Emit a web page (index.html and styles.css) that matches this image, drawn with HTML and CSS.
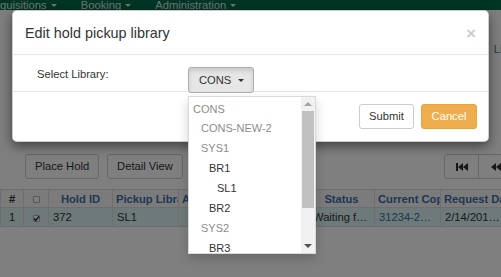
FILE: index.html
```html
<!DOCTYPE html>
<html>
<head>
<meta charset="utf-8">
<link rel="stylesheet" href="styles.css">
</head>
<body>
<div class="page">
  <nav class="navbar">
    <span class="nav-item">quisitions <b class="caret"></b></span>
    <span class="nav-item">Booking <b class="caret"></b></span>
    <span class="nav-item">Administration <b class="caret"></b></span>
  </nav>
  <div class="subhead"><span class="subhead-text">Line</span></div>
  <div class="toolbar">
    <button class="btn">Place Hold</button>
    <button class="btn">Detail View</button>
    <div class="pager">
      <button class="btn pg"><svg width="12" height="8" viewBox="0 0 12 8"><rect x="0" y="0" width="2" height="8" fill="#333"/><path d="M2 4 L7 0 V8 Z M7 4 L12 0 V8 Z" fill="#333"/></svg></button>
      <button class="btn pg"><svg width="10" height="8" viewBox="0 0 10 8"><path d="M0 4 L5 0 V8 Z M5 4 L10 0 V8 Z" fill="#333"/></svg></button>
    </div>
  </div>
  <table class="grid">
    <colgroup>
      <col class="c-num"><col class="c-cb"><col class="c-id"><col class="c-w"><col class="c-wide"><col class="c-w"><col class="c-w"><col class="c-w">
    </colgroup>
    <thead>
      <tr>
        <th class="plain">#</th>
        <th><span class="cb"></span></th>
        <th>Hold ID</th>
        <th>Pickup Library</th>
        <th class="left">Available</th>
        <th>Status</th>
        <th>Current Copy</th>
        <th>Request Date</th>
      </tr>
    </thead>
    <tbody>
      <tr class="sel">
        <td class="center">1</td>
        <td class="center"><span class="cb checked"><svg width="7" height="7" viewBox="0 0 7 7"><path d="M1 3.6 L2.8 5.4 L6 1.4" fill="none" stroke="#222" stroke-width="1.4"/></svg></span></td>
        <td>372</td>
        <td>SL1</td>
        <td></td>
        <td>Waiting for Copy</td>
        <td class="link">31234-22001</td>
        <td>2/14/2018 10:21</td>
      </tr>
    </tbody>
  </table>
</div>
<div class="backdrop"></div>
<div class="modal">
  <div class="modal-header">
    <h4 class="modal-title">Edit hold pickup library</h4>
    <span class="close">&times;</span>
  </div>
  <div class="modal-body">
    <label class="field-label">Select Library:</label>
    <div class="dd">
      <button class="btn dd-toggle">CONS <span class="caret"></span></button>
      <div class="dd-menu">
        <ul class="dd-list">
          <li class="lv0 grp">CONS</li>
          <li class="lv1 grp">CONS-NEW-2</li>
          <li class="lv1 grp">SYS1</li>
          <li class="lv2">BR1</li>
          <li class="lv3">SL1</li>
          <li class="lv2">BR2</li>
          <li class="lv1 grp">SYS2</li>
          <li class="lv2">BR3</li>
        </ul>
        <div class="sb">
          <div class="sb-btn"><span class="tri up"></span></div>
          <div class="sb-thumb"></div>
          <div class="sb-track"></div>
          <div class="sb-btn"><span class="tri down"></span></div>
        </div>
      </div>
    </div>
  </div>
  <div class="modal-footer">
    <button class="btn">Submit</button>
    <button class="btn btn-warning">Cancel</button>
  </div>
</div>
</body>
</html>
```
FILE: styles.css
```css
* { box-sizing: border-box; }
html, body { margin: 0; padding: 0; }
body {
  width: 501px;
  height: 277px;
  overflow: hidden;
  position: relative;
  background: #fff;
  color: #333;
  font-family: "Liberation Sans", Arial, sans-serif;
  font-size: 11.2px;
}
button { font-family: inherit; }

.navbar {
  height: 10px;
  background: #006b4c;
  display: flex;
  gap: 24px;
  overflow: hidden;
  color: #dfe8e4;
  line-height: 13px;
}
.nav-item { margin-top: -1.5px; white-space: nowrap; }
.caret {
  display: inline-block;
  width: 0; height: 0;
  vertical-align: middle;
  border-top: 3px solid;
  border-left: 3px solid transparent;
  border-right: 3px solid transparent;
  margin-left: 1px;
}

.subhead {
  height: 144px;
  display: flex;
  justify-content: flex-end;
  align-items: flex-start;
  padding-top: 33px;
}
.subhead-text { margin-right: -14px; color: #337ab7; }

.toolbar {
  display: flex;
  gap: 8px;
  padding-left: 25px;
  margin-right: -12px;
  margin-bottom: 10px;
}
.btn {
  height: 25px;
  padding: 0 9px;
  border: 1px solid #ccc;
  border-radius: 3px;
  background: #fff;
  color: #333;
  font-size: 11.2px;
  line-height: 23px;
  white-space: nowrap;
}
.pager { margin-left: auto; display: flex; }
.pg { width: 35px; padding: 0; display: flex; align-items: center; justify-content: center; }
.pg:first-child { border-radius: 3px 0 0 3px; }
.pg:last-child { border-radius: 0; margin-left: -1px; }

.grid {
  table-layout: fixed;
  border-collapse: collapse;
  width: 506px;
  font-size: 11.2px;
}
.c-num { width: 23px; }
.c-cb { width: 25px; }
.c-id { width: 64px; }
.c-w { width: 66px; }
.c-wide { width: 130px; }
.grid th, .grid td {
  border: 1px solid #ddd;
  overflow: hidden;
  white-space: nowrap;
  padding: 0 3px;
}
.grid th {
  height: 18px;
  font-weight: bold;
  color: #3a6fa8;
  text-align: center;
  background: #f6f6f6;
}
.grid th.plain { color: #333; }
.grid th.left { text-align: left; }
.grid td {
  height: 19px;
  text-overflow: ellipsis;
  padding: 0 4px;
}
.grid td.center { text-align: center; }
.grid td.link { color: #3a6fa8; }
.grid tr.sel td { background: #dcf2f2; }
.cb {
  display: inline-block;
  width: 7px; height: 7px;
  border: 1px solid #aaa;
  border-radius: 1px;
  background: #fff;
  vertical-align: middle;
  position: relative;
}
.cb svg { display: block; margin: -1px 0 0 -1px; }

.backdrop {
  position: absolute;
  inset: 0;
  background: rgba(0,0,0,0.5);
}

.modal {
  position: absolute;
  left: 12px;
  top: 10px;
  width: 477px;
  background: #fff;
  border: 1px solid rgba(0,0,0,0.2);
  border-radius: 5px;
  box-shadow: 0 4px 12px rgba(0,0,0,0.5);
}
.modal-header {
  height: 44px;
  padding: 12px 12px 0 12px;
  border-bottom: 1px solid #e5e5e5;
  display: flex;
  justify-content: space-between;
  align-items: flex-start;
}
.modal-title {
  margin: 0;
  font-size: 14.4px;
  font-weight: normal;
  line-height: 20.6px;
  color: #333;
}
.close {
  font-size: 16.8px;
  font-weight: bold;
  color: #000;
  opacity: 0.2;
  line-height: 16px;
  margin-top: 3px;
}
.modal-body {
  height: 36px;
  padding: 11px 0 0 24px;
  display: flex;
  align-items: flex-start;
}
.field-label {
  width: 151px;
  line-height: 16px;
}
.dd { position: relative; margin-top: 1px; }
.dd-toggle {
  height: 26px;
  padding: 0 9px 0 10px;
  background: #e6e6e6;
  border-color: #adadad;
  box-shadow: inset 0 3px 4px rgba(0,0,0,0.125);
  line-height: 24px;
}
.dd-toggle .caret { margin-left: 4px; margin-top: -1px; }
.dd-menu {
  position: absolute;
  top: calc(100% + 3px);
  left: 0;
  width: 128px;
  height: 158px;
  background: #fff;
  border: 1px solid rgba(0,0,0,0.15);
  box-shadow: 0 5px 10px rgba(0,0,0,0.18);
  display: flex;
  z-index: 5;
}
.dd-list {
  list-style: none;
  margin: 0;
  padding: 2.5px 0 0 0;
  flex: 1;
  overflow: hidden;
  font-size: 11px;
}
.dd-list li { line-height: 19.9px; height: 19.9px; color: #333; white-space: nowrap; }
.dd-list li.grp { color: #8c8c8c; }
.lv0 { padding-left: 4px; }
.lv1 { padding-left: 12px; }
.lv2 { padding-left: 20px; }
.lv3 { padding-left: 28px; }

.sb {
  width: 14px;
  background: #f1f1f1;
  display: flex;
  flex-direction: column;
}
.sb-btn {
  height: 14px;
  display: flex;
  align-items: center;
  justify-content: center;
}
.sb-thumb { height: 97px; margin: 0 1px; background: #c1c1c1; }
.sb-track { flex: 1; }
.tri { width: 0; height: 0; border-left: 4px solid transparent; border-right: 4px solid transparent; }
.tri.up { border-bottom: 4px solid #a3a3a3; }
.tri.down { border-top: 4px solid #505050; }

.modal-footer {
  padding: 12px 11px 12px 12px;
  border-top: 1px solid #e5e5e5;
  display: flex;
  justify-content: flex-end;
  gap: 7px;
}
.modal-footer .btn { width: 55px; padding: 0; }
.btn-warning { background: #f0ad4e; border-color: #eea236; color: #fff; width: 56px !important; }
```
